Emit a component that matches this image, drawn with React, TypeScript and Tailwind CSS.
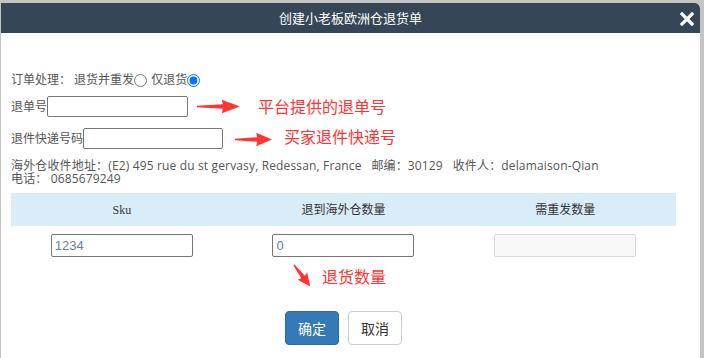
import React from 'react';

const sans = { fontFamily: '"Open Sans", "Noto Sans CJK SC", sans-serif' };

const RightArrow = ({ w }: { w: number }) => {
  const head = w * 0.6;
  return (
    <svg width={w} height={15} viewBox={`0 0 ${w} 15`} className="shrink-0">
      <polygon
        points={`0,6.8 ${head},5.2 ${head - 1},0.8 ${w},7.5 ${head - 1},14.2 ${head},9.8 0,8.2`}
        fill="#ff3434"
      />
    </svg>
  );
};

const DownArrow = () => (
  <svg width={22} height={26} viewBox="0 0 22 26" className="shrink-0">
    <g transform="translate(2,1) rotate(53)">
      <polygon points="0,-0.7 15,-2.2 14,-6 27,0 14,6 15,2.2 0,0.7" fill="#ff3434" />
    </g>
  </svg>
);

const App = () => {
  return (
    <div className="w-[704px] h-[358px] bg-[#c4c4c4] pt-[3px] overflow-hidden" style={sans}>
      <div className="ml-[1px] w-[699px] h-[355px] bg-white rounded-tr-[5px] overflow-hidden">
        <div className="relative h-[30px] bg-[#364656] rounded-tr-[5px] flex items-center justify-center">
          <span className="text-[13px] text-white leading-none">创建小老板欧洲仓退货单</span>
          <svg width={14} height={14} viewBox="0 0 14 14" className="absolute right-[6px] top-[9px]">
            <path d="M2 2 L12 12 M12 2 L2 12" stroke="white" strokeWidth={3.2} strokeLinecap="square" />
          </svg>
        </div>

        <div className="px-[10px] pt-[39px] text-[12px] text-[#555]">
          <div className="flex items-center h-[16px] leading-[16px]">
            <span>订单处理： 退货并重发</span>
            <input type="radio" name="mode" className="m-0 w-[13px] h-[13px]" readOnly />
            <span className="ml-[4px]">仅退货</span>
            <input type="radio" name="mode" defaultChecked className="m-0 w-[13px] h-[13px]" readOnly />
          </div>

          <div className="mt-[8px] flex items-center h-[21px]">
            <span>退单号</span>
            <input className="w-[141px] h-[21px] border border-[#767676] rounded-[2px] outline-none" readOnly />
            <div className="ml-[9px]">
              <RightArrow w={43} />
            </div>
            <span className="ml-[18px] text-[16px] text-[#ff3434] leading-none">平台提供的退单号</span>
          </div>

          <div className="mt-[11px] flex items-center h-[21px]">
            <span>退件快递号码</span>
            <input className="w-[140px] h-[21px] border border-[#767676] rounded-[2px] outline-none" readOnly />
            <div className="ml-[12px] mt-[2px]">
              <RightArrow w={37} />
            </div>
            <span className="ml-[12px] -mt-[4px] text-[16px] text-[#ff3434] leading-none">买家退件快递号</span>
          </div>

          <div className="mt-[10px] leading-[13px] tracking-[0.15px]">
            <div>海外仓收件地址：(E2) 495 rue du st gervasy, Redessan, France&nbsp;&nbsp; 邮编：30129&nbsp;&nbsp; 收件人：delamaison-Qian</div>
            <div>电话： 0685679249</div>
          </div>

          <div className="mt-[8px] w-[665px]">
            <div
              className="grid grid-cols-3 h-[33px] bg-[#d9edf9] items-center text-center text-[12px] text-[#333]"
              style={{ fontFamily: '"Liberation Serif", "Noto Sans CJK SC", serif' }}
            >
              <span>Sku</span>
              <span>退到海外仓数量</span>
              <span>需重发数量</span>
            </div>
            <div className="grid grid-cols-3 pt-[8px] justify-items-center">
              <input
                defaultValue="1234"
                className="w-[142px] h-[23px] border border-[#767676] rounded-[2px] px-[3px] text-[13px] text-[#6b7f9c] outline-none"
                style={{ fontFamily: '"Liberation Sans", sans-serif' }}
                readOnly
              />
              <input
                defaultValue="0"
                className="w-[142px] h-[23px] border border-[#767676] rounded-[2px] px-[3px] text-[13px] text-[#6b7f9c] outline-none"
                style={{ fontFamily: '"Liberation Sans", sans-serif' }}
                readOnly
              />
              <input
                disabled
                className="w-[142px] h-[23px] border border-[#d8d8d8] rounded-[2px] bg-[#f8f8f8] outline-none"
              />
            </div>
            <div className="flex items-start pt-[7px] pl-[281px] h-[30px]">
              <DownArrow />
              <span className="ml-[8px] mt-[5px] text-[16px] text-[#ff3434] leading-none">退货数量</span>
            </div>
          </div>

          <div className="mt-[24px] flex justify-center gap-[9px] pr-[14px]">
            <button className="w-[54px] h-[34px] rounded-[4px] bg-[#337ab7] border border-[#2e6da4] text-white text-[14px]">
              确定
            </button>
            <button className="w-[54px] h-[34px] rounded-[4px] bg-white border border-[#ccc] text-[#333] text-[14px]">
              取消
            </button>
          </div>
        </div>
      </div>
    </div>
  );
};

export default App;
